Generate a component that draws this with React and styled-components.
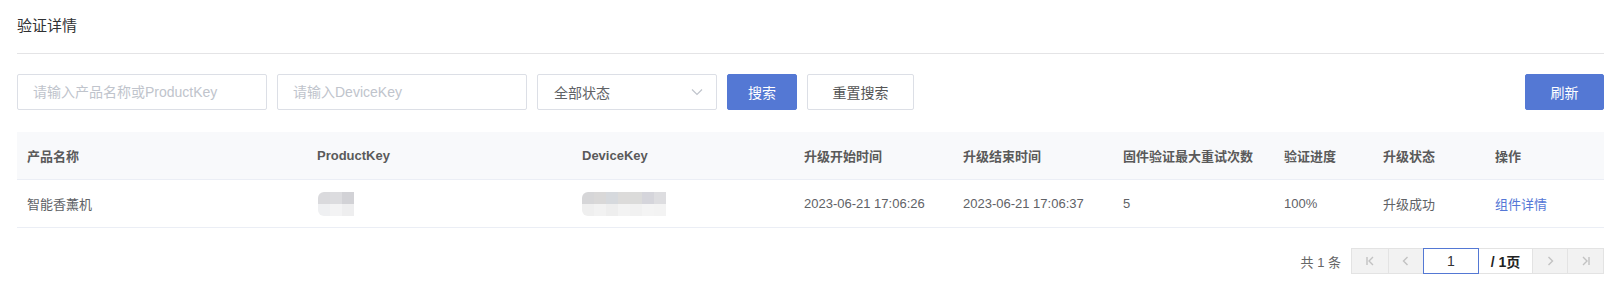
import React from "react";
import styled, { createGlobalStyle } from "styled-components";

const GlobalStyle = createGlobalStyle`
  html, body { margin: 0; padding: 0; background: #fff; }
  body { font-family: "Liberation Sans", Arial, "Noto Sans CJK SC", sans-serif; color: #606266; }
  * { box-sizing: border-box; }
`;

const Page = styled.div`
  padding: 0 18px 0 17px;
`;

const Header = styled.div`
  height: 54px;
  display: flex;
  align-items: center;
  border-bottom: 1px solid #e4e4e6;
`;

const Title = styled.h2`
  margin: 0 0 1px;
  font-size: 15px;
  font-weight: 400;
  color: #303133;
  line-height: 18px;
`;

const Toolbar = styled.div`
  margin-top: 20px;
  display: flex;
  align-items: center;
  gap: 10px;
  height: 36px;
`;

const TextInput = styled.input`
  width: ${(p) => p.$w}px;
  height: 36px;
  border: 1px solid #dcdfe6;
  border-radius: 2px;
  padding: 0 15px;
  font-family: inherit;
  font-size: 14px;
  color: #606266;
  outline: none;
  &::placeholder { color: #c0c4cc; }
`;

const Select = styled.div`
  width: 180px;
  height: 36px;
  border: 1px solid #dcdfe6;
  border-radius: 2px;
  padding: 0 13px 0 16px;
  display: flex;
  align-items: center;
  justify-content: space-between;
  font-size: 14px;
  color: #606266;
`;

const Button = styled.button`
  height: 36px;
  width: ${(p) => p.$w}px;
  border-radius: 2px;
  font-family: inherit;
  font-size: 14px;
  cursor: pointer;
  padding: 0;
  border: 1px solid ${(p) => (p.$primary ? "#5478d4" : "#dcdfe6")};
  background: ${(p) => (p.$primary ? "#5478d4" : "#fff")};
  color: ${(p) => (p.$primary ? "#fff" : "#555")};
`;

const Spacer = styled.div`
  flex: 1;
`;

const Table = styled.div`
  margin-top: 22px;
`;

const cols = "290px 265px 222px 159px 160px 161px 99px 112px 118px";

const HeadRow = styled.div`
  display: grid;
  grid-template-columns: ${cols};
  height: 48px;
  background: #f8f9fb;
  border-bottom: 1px solid #ebeef5;
  align-items: center;
`;

const Row = styled.div`
  display: grid;
  grid-template-columns: ${cols};
  height: 48px;
  border-bottom: 1px solid #ebeef5;
  align-items: center;
`;

const HeadCell = styled.div`
  padding: 0 10px;
  font-size: 13px;
  font-weight: 700;
  color: #5a5a5a;
  white-space: nowrap;
`;

const Cell = styled.div`
  padding: 0 10px;
  font-size: 13px;
  color: #606266;
  white-space: nowrap;
`;

const Link = styled.a`
  color: #5477d6;
  text-decoration: none;
  cursor: pointer;
`;

const Blur = styled.div`
  display: grid;
  grid-template-columns: repeat(${(p) => p.$n}, 12px);
  grid-template-rows: 12px 12px;
  width: max-content;
  margin-left: ${(p) => p.$ml || 0}px;
  border-radius: 6px 0 0 6px;
  overflow: hidden;
`;

const Pix = styled.span`
  display: block;
  background: ${(p) => p.$c};
`;

const Pager = styled.div`
  margin-top: 20px;
  display: flex;
  justify-content: flex-end;
  align-items: center;
  height: 26px;
`;

const Total = styled.span`
  font-size: 13px;
  color: #666;
  margin-right: 10px;
`;

const PagerBox = styled.div`
  display: flex;
  height: 26px;
  border: 1px solid #e3e3e3;
`;

const PageBtn = styled.div`
  width: ${(p) => p.$w}px;
  height: 24px;
  background: #f2f2f2;
  border-left: ${(p) => (p.$first ? "none" : "1px solid #e3e3e3")};
  display: flex;
  align-items: center;
  justify-content: center;
  color: #c4c4c4;
`;

const PageInput = styled.input`
  width: 56px;
  height: 26px;
  margin-top: -1px;
  border: 1px solid #5478d4;
  text-align: center;
  font-family: inherit;
  font-size: 14px;
  color: #333;
  outline: none;
  padding: 0;
`;

const PageLabel = styled.div`
  width: 53px;
  height: 24px;
  background: #fff;
  display: flex;
  align-items: center;
  justify-content: center;
  font-size: 14px;
  font-weight: 700;
  color: #222;
`;

const Chevron = () => (
  <svg width="12" height="8" viewBox="0 0 12 8">
    <path d="M1 1.5 L6 6.5 L11 1.5" fill="none" stroke="#c0c4cc" strokeWidth="1.2" />
  </svg>
);

const Icon = ({ d }) => (
  <svg width="12" height="12" viewBox="0 0 12 12">
    <path d={d} fill="none" stroke="#c2c2c2" strokeWidth="1.4" />
  </svg>
);

const pkColors = ["#dadadd", "#dcdcdf", "#d2d2d6", "#eff0f2", "#f3f3f4", "#eeeeef"];
const dkColors = [
  "#d6d6d8", "#d9d8d8", "#d6d9dd", "#dcdbda", "#dbdbda", "#d5d5db", "#dddde0",
  "#efefef", "#f2f2f2", "#eeeeee", "#f3f3f3", "#f1f1f1", "#f4f4f4", "#f3f3f3",
];

const headers = [
  "产品名称", "ProductKey", "DeviceKey", "升级开始时间", "升级结束时间",
  "固件验证最大重试次数", "验证进度", "升级状态", "操作",
];

export default function App() {
  return (
    <>
      <GlobalStyle />
      <Page>
        <Header>
          <Title>验证详情</Title>
        </Header>
        <Toolbar>
          <TextInput $w={250} placeholder="请输入产品名称或ProductKey" />
          <TextInput $w={250} placeholder="请输入DeviceKey" />
          <Select>
            <span>全部状态</span>
            <Chevron />
          </Select>
          <Button $primary $w={70}>搜索</Button>
          <Button $w={107}>重置搜索</Button>
          <Spacer />
          <Button $primary $w={79}>刷新</Button>
        </Toolbar>
        <Table>
          <HeadRow>
            {headers.map((h) => (
              <HeadCell key={h}>{h}</HeadCell>
            ))}
          </HeadRow>
          <Row>
            <Cell>智能香薰机</Cell>
            <Cell>
              <Blur $n={3} $ml={1}>
                {pkColors.map((c, i) => <Pix key={i} $c={c} />)}
              </Blur>
            </Cell>
            <Cell>
              <Blur $n={7}>
                {dkColors.map((c, i) => <Pix key={i} $c={c} />)}
              </Blur>
            </Cell>
            <Cell>2023-06-21 17:06:26</Cell>
            <Cell>2023-06-21 17:06:37</Cell>
            <Cell>5</Cell>
            <Cell>100%</Cell>
            <Cell>升级成功</Cell>
            <Cell><Link>组件详情</Link></Cell>
          </Row>
        </Table>
        <Pager>
          <Total>共 1 条</Total>
          <PagerBox>
            <PageBtn $first $w={36}><Icon d="M3 2 V10 M9 2 L5 6 L9 10" /></PageBtn>
            <PageBtn $w={35}><Icon d="M7.5 2 L3.5 6 L7.5 10" /></PageBtn>
            <PageInput defaultValue="1" />
            <PageLabel>/ 1页</PageLabel>
            <PageBtn $w={35}><Icon d="M4.5 2 L8.5 6 L4.5 10" /></PageBtn>
            <PageBtn $w={36}><Icon d="M3 2 L7 6 L3 10 M9 2 V10" /></PageBtn>
          </PagerBox>
        </Pager>
      </Page>
    </>
  );
}
